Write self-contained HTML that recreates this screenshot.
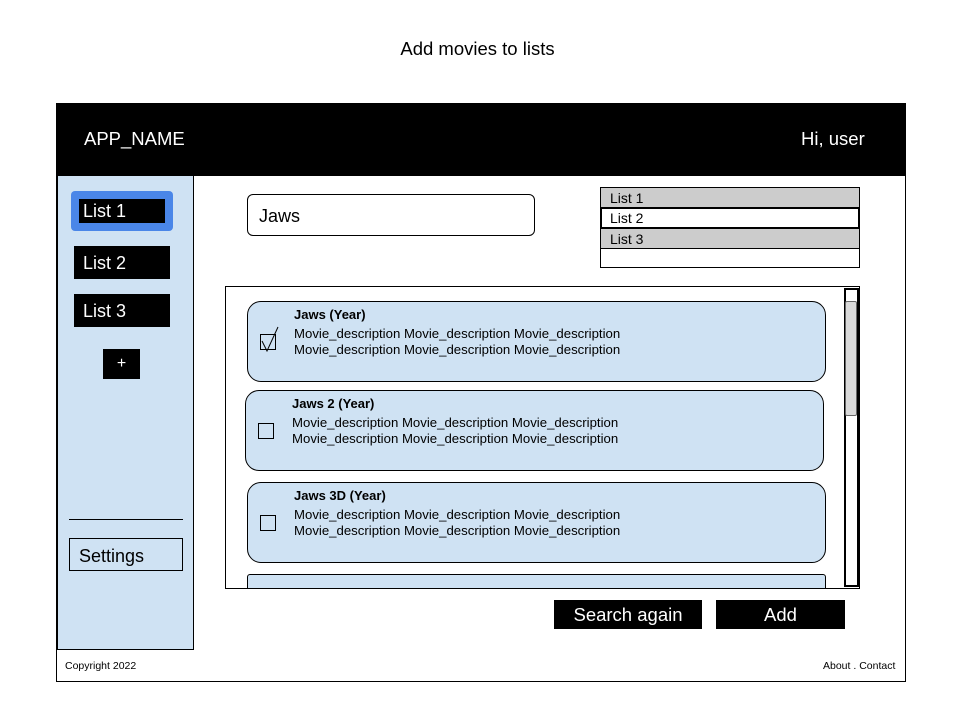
<!DOCTYPE html><html><head><style>
*{margin:0;padding:0;box-sizing:border-box}
body{width:960px;height:720px;background:#fff;font-family:"Liberation Sans",Arial,sans-serif;position:relative;overflow:hidden}
.a{position:absolute}
.blk{background:#000;color:#fff}
.card{position:absolute;background:#cfe2f3;border:1px solid #000;border-radius:14px}
.card b{position:absolute;left:46px;top:5px;font-size:13px}
.card .d{position:absolute;left:46px;top:24px;font-size:13.2px;line-height:16px}
.cb{position:absolute;left:12px;top:32px;width:16px;height:16px;border:1px solid #000}
</style></head><body>
<div class="a" style="left:0;top:38px;width:955px;text-align:center;font-size:18.5px">Add movies to lists</div>
<div class="a" style="left:56px;top:103px;width:850px;height:579px;border:1px solid #000"></div>
<div class="a blk" style="left:56px;top:103px;width:850px;height:73px"></div>
<div class="a" style="left:84px;top:128px;color:#fff;font-size:18.5px">APP_NAME</div>
<div class="a" style="left:801px;top:128px;color:#fff;font-size:18.5px">Hi, user</div>
<div class="a" style="left:57px;top:176px;width:137px;height:474px;background:#cfe2f3;border:1px solid #000;border-top:none"></div>
<div class="a" style="left:71px;top:191px;width:102px;height:40px;background:#4a86e8;border-radius:4px"></div>
<div class="a blk" style="left:79px;top:199px;width:86px;height:24px;font-size:18px;padding:2px 0 0 4px">List 1</div>
<div class="a blk" style="left:74px;top:246px;width:96px;height:33px;font-size:18px;padding:7px 0 0 9px">List 2</div>
<div class="a blk" style="left:74px;top:294px;width:96px;height:33px;font-size:18px;padding:7px 0 0 9px">List 3</div>
<div class="a blk" style="left:103px;top:349px;width:37px;height:30px;font-size:16px;text-align:center;line-height:30px">+</div>
<div class="a" style="left:69px;top:519px;width:114px;height:1px;background:#000"></div>
<div class="a" style="left:69px;top:538px;width:114px;height:33px;border:1px solid #000;font-size:18px;padding:7px 0 0 9px">Settings</div>
<div class="a" style="left:65px;top:660px;font-size:10.5px">Copyright 2022</div>
<div class="a" style="left:823px;top:660px;font-size:10.5px">About . Contact</div>
<div class="a" style="left:247px;top:194px;width:288px;height:42px;border:1px solid #000;border-radius:6px;font-size:18px;padding:11px 0 0 11px">Jaws</div>
<div class="a" style="left:600px;top:187px;width:260px;height:81px;border:1px solid #000"></div>
<div class="a" style="left:600px;top:187px;width:260px;height:21px;background:#ccc;border:1px solid #000;font-size:14px;padding:2px 0 0 9px">List 1</div>
<div class="a" style="left:600px;top:207px;width:260px;height:22px;border:2px solid #000;font-size:14px;padding:1px 0 0 8px">List 2</div>
<div class="a" style="left:600px;top:228px;width:260px;height:21px;background:#ccc;border:1px solid #000;font-size:14px;padding:2px 0 0 9px">List 3</div>
<div class="a" style="left:225px;top:286px;width:635px;height:303px;border:1px solid #000;overflow:hidden">
<div class="card" style="left:21px;top:14px;width:579px;height:81px"><b>Jaws (Year)</b><div class="d">Movie_description Movie_description Movie_description<br>Movie_description Movie_description Movie_description</div><div class="cb"></div>
<svg class="a" style="left:12px;top:22px" width="24" height="30"><path d="M2 17 L7 27 L18 3" fill="none" stroke="#000" stroke-width="1"/></svg></div>
<div class="card" style="left:19px;top:103px;width:579px;height:81px"><b>Jaws 2 (Year)</b><div class="d">Movie_description Movie_description Movie_description<br>Movie_description Movie_description Movie_description</div><div class="cb"></div></div>
<div class="card" style="left:21px;top:195px;width:579px;height:81px"><b>Jaws 3D (Year)</b><div class="d">Movie_description Movie_description Movie_description<br>Movie_description Movie_description Movie_description</div><div class="cb"></div></div>
<div class="card" style="left:21px;top:287px;width:579px;height:40px;border-radius:3px"></div>
<div class="a" style="left:618px;top:1px;width:15px;height:299px;border:2px solid #000;background:#fff"></div>
<div class="a" style="left:619px;top:14px;width:12px;height:115px;background:#d9d9d9;border:1px solid #666;border-radius:2px"></div>
</div>
<div class="a blk" style="left:554px;top:600px;width:148px;height:29px;font-size:18.5px;text-align:center;line-height:30px">Search again</div>
<div class="a blk" style="left:716px;top:600px;width:129px;height:29px;font-size:18.5px;text-align:center;line-height:30px">Add</div>
</body></html>
